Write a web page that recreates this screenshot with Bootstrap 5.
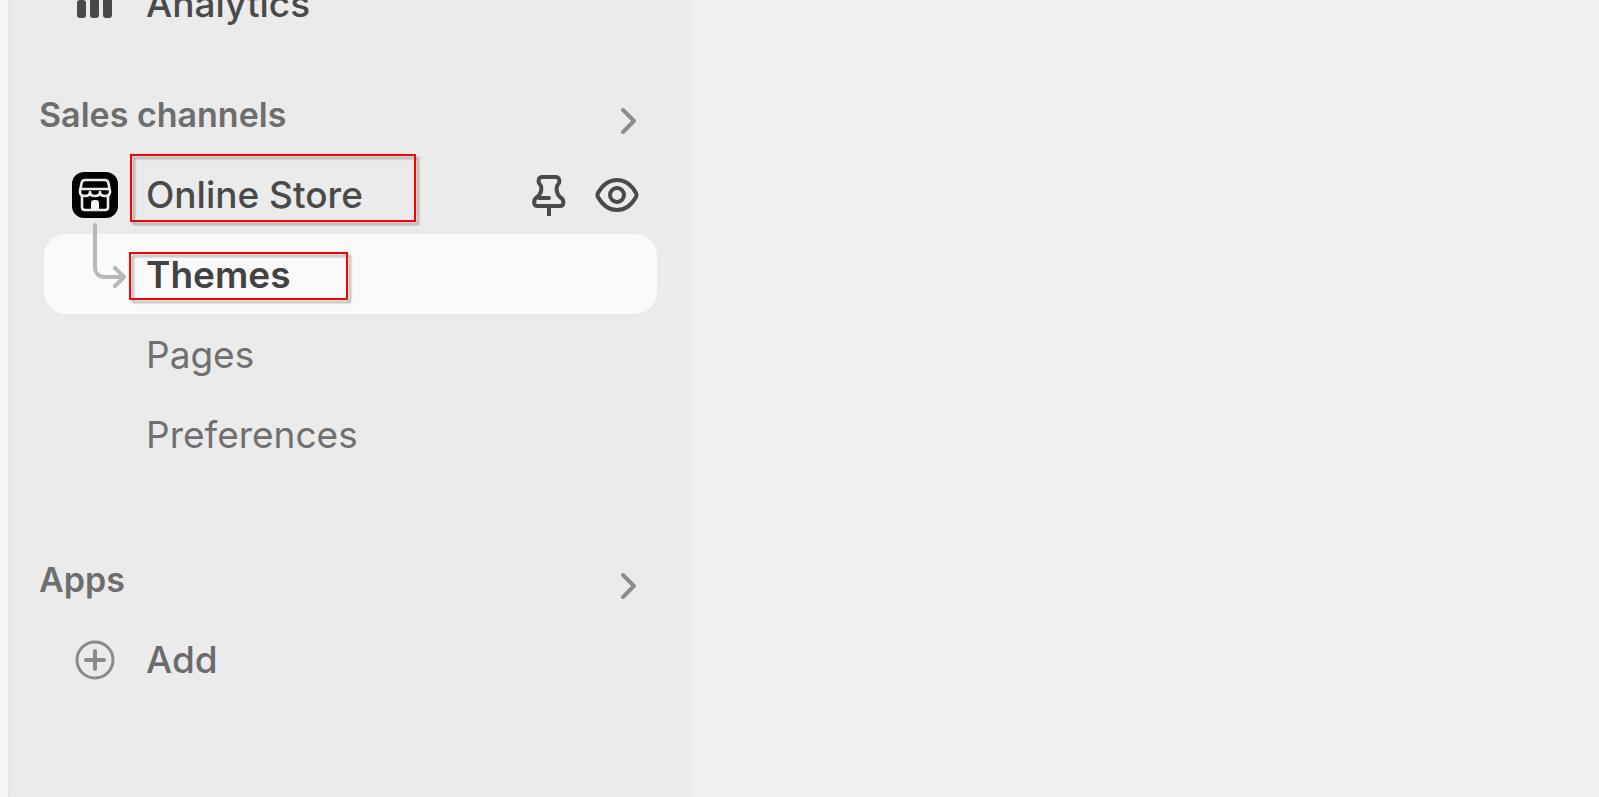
<!DOCTYPE html>
<html lang="en">
<head>
<meta charset="utf-8">
<meta name="viewport" content="width=device-width, initial-scale=1">
<title>Online Store - Themes</title>
<link href="https://cdn.jsdelivr.net/npm/bootstrap@5.3.0/dist/css/bootstrap.min.css" rel="stylesheet">
<style>
  body { background: #f0f0f0; font-family: Inter, "Liberation Sans", sans-serif; font-size: 37px; line-height: 44px; color: #4a4a4a; overflow: hidden; }
  a, a:hover { color: inherit; text-decoration: none; }
  svg { display: block; flex: none; }
  .edge-strip { flex: 0 0 8px; background: #f6f6f6; }
  .side-panel { flex: 0 1 683px; min-width: 0; padding: 0 34px 0 36px; background: #ebebeb; box-shadow: inset 4px 0 3px -2px #e2e2e2; }
  .side-list { margin-top: -37px; }
  .side-row { height: 80px; padding: 2px 18px 0 28px; border-radius: 22px; }
  .side-row > a { padding-left: 28px; font-weight: 500; }
  .side-row.sub-row { padding-left: 74px; }
  .sub-row > a { font-weight: 400; color: #707070; }
  .side-row.is-active { background: #fafafa; }
  .side-row.is-active > a { font-weight: 600; color: #424242; }
  .side-head { height: 80px; margin: 0 18px 0 -5px; padding-top: 2px; font-size: 34px; font-weight: 600; color: #6e6e6e; }
  .side-head h2 { font: inherit; margin: 0; }
  .side-head button { color: #8c8c8c; padding-top: 12px; }
  .bare-btn { background: none; border: 0; padding: 0; color: #4a4a4a; }
  .section-gap { margin-top: 31px; }
  .apps-gap { margin-top: 65px; }
  .muted-row { color: #6b6b6b; }
  .elbow { position: absolute; left: 48px; top: -12px; color: #b8b8b8; }
  .callout-box { position: absolute; border: 2px solid #f00; filter: drop-shadow(3px 3px 1px rgba(0,0,0,.3)); pointer-events: none; }
  .callout-store { left: 86px; top: 0; width: 286px; height: 68px; }
  .callout-themes { left: 85px; top: 18px; width: 219px; height: 48px; }
</style>
</head>
<body>
<div class="d-flex min-vh-100">
  <div class="edge-strip"></div>
  <nav class="side-panel" aria-label="Main">
    <div class="side-list">
      <div class="side-row d-flex align-items-center">
        <svg width="46" height="46" viewBox="0 0 46 46" fill="currentColor"><rect x="5" y="19" width="9" height="18" rx="3"/><rect x="18" y="6" width="9" height="31" rx="3"/><rect x="31" y="12" width="9" height="25" rx="3"/></svg>
        <a href="#">Analytics</a>
      </div>

      <div class="side-head section-gap d-flex align-items-center justify-content-between">
        <h2>Sales channels</h2>
        <button class="bare-btn" type="button" aria-label="Show sales channels"><svg width="20" height="30" viewBox="0 0 20 30" fill="none" stroke="currentColor" stroke-width="4" stroke-linecap="round" stroke-linejoin="round"><path d="M4 4l11 11L4 26"/></svg></button>
      </div>

      <div class="side-row d-flex align-items-center position-relative">
        <svg width="46" height="46" viewBox="0 0 46 46" fill="none"><rect width="46" height="46" rx="12" fill="#000"/><g stroke="#ededed" stroke-width="2.600" stroke-linejoin="round"><path d="M13 8h20c2 0 3 1 3.400 3L38 19v1c0 3-2 4-5 4s-5-1-5-4c0 3-2 4-5 4s-5-1-5-4c0 3-2 4-5 4s-5-1-5-4v-1l1.600-8C10 9 11 8 13 8z"/><path d="M9 17h28M10 24v11c0 2 1 3 3 3h20c2 0 3-1 3-3V24"/></g><path d="M19 38v-7c0-2 1-3 3-3h2c2 0 3 1 3 3v7z" fill="#f2f2f2"/></svg>
        <a href="#">Online Store</a>
        <div class="d-flex align-items-center gap-4 ms-auto">
          <button class="bare-btn" type="button" aria-label="Pin"><svg width="44" height="44" viewBox="0 0 44 44" fill="none" stroke="currentColor" stroke-width="4" stroke-linecap="round" stroke-linejoin="round"><path d="M15 4h14c3 0 4 4 3 6l-2 3c-1 4 0 8 3 11 5 3 4 9 0 9H11c-5 0-5-6-1-9 4-3 5-7 4-11l-2-3c-1-3 0-6 3-6zM12 25h10"/><path d="M22 33v10" stroke-linecap="butt"/></svg></button>
          <button class="bare-btn" type="button" aria-label="View store"><svg width="44" height="44" viewBox="0 0 44 44" fill="none" stroke="currentColor" stroke-width="4" stroke-linejoin="round"><path d="M3 20C8 11 14 7 22 7s14 4 19 13q1 2 0 4C36 33 30 37 22 37S8 33 3 24q-1-2 0-4z"/><circle cx="22" cy="22" r="7"/></svg></button>
        </div>
        <span class="callout-box callout-store"></span>
      </div>

      <div class="side-row sub-row is-active d-flex align-items-center position-relative">
        <svg class="elbow" width="36" height="70" viewBox="0 0 36 70" fill="none" stroke="currentColor" stroke-width="4" stroke-linecap="round" stroke-linejoin="round"><path d="M3 3v42c0 6 4 10 10 10h18M23 46l9 9-9 9"/></svg>
        <a href="#" aria-current="page">Themes</a>
        <span class="callout-box callout-themes"></span>
      </div>
      <div class="side-row sub-row d-flex align-items-center"><a href="#">Pages</a></div>
      <div class="side-row sub-row d-flex align-items-center"><a href="#">Preferences</a></div>

      <div class="side-head apps-gap d-flex align-items-center justify-content-between">
        <h2>Apps</h2>
        <button class="bare-btn" type="button" aria-label="Show apps"><svg width="20" height="30" viewBox="0 0 20 30" fill="none" stroke="currentColor" stroke-width="4" stroke-linecap="round" stroke-linejoin="round"><path d="M4 4l11 11L4 26"/></svg></button>
      </div>
      <div class="side-row muted-row d-flex align-items-center">
        <svg width="46" height="46" viewBox="0 0 46 46" fill="none" stroke="#8a8a8a" stroke-width="3" stroke-linecap="round"><circle cx="23" cy="23" r="18"/><path d="M23 14v18M14 23h18" stroke-width="4"/></svg>
        <a href="#">Add</a>
      </div>
    </div>
  </nav>
  <main class="flex-grow-1"></main>
</div>
<script src="https://cdn.jsdelivr.net/npm/bootstrap@5.3.0/dist/js/bootstrap.bundle.min.js"></script>
</body>
</html>
